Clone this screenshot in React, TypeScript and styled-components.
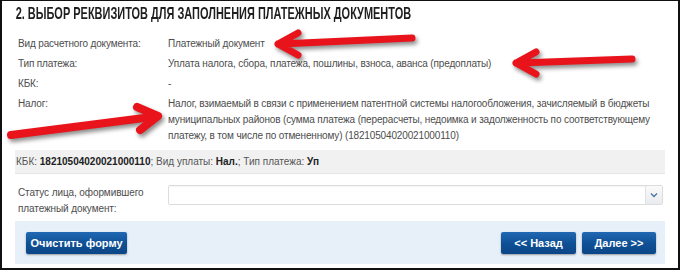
import React from 'react'
import styled, { createGlobalStyle } from 'styled-components'

const GlobalStyle = createGlobalStyle`
  html, body {
    margin: 0;
    padding: 0;
    background: #fff;
  }
  body {
    font-family: "Liberation Sans", Arial, sans-serif;
  }
`

const Frame = styled.div`
  position: relative;
  box-sizing: border-box;
  width: 680px;
  height: 270px;
  border: 2px solid #111;
  border-top-width: 1px;
  padding: 0 13px;
  overflow: hidden;
  background: #fff;
`

const Title = styled.h2`
  margin: 0;
  padding: 3px 0 0 1px;
  height: 22px;
  font-family: "Liberation Sans", Arial, sans-serif;
  font-weight: 700;
  font-size: 17px;
  line-height: 20px;
  color: #1e1e1e;
  white-space: nowrap;
  transform: scaleX(0.645);
  transform-origin: left center;
`

const Details = styled.div`
  display: grid;
  grid-template-columns: 150px 1fr;
  row-gap: 4px;
  margin-top: 10px;
  padding-left: 3px;
  font-size: 10px;
  letter-spacing: -0.15px;
  line-height: 16px;
  color: #4d4d4d;
`

const Label = styled.div``

const Value = styled.div``

const KbkBar = styled.div`
  margin-top: 6px;
  height: 23px;
  display: flex;
  align-items: center;
  padding-left: 1px;
  background: #f1f1f1;
  border-bottom: 1px solid #e6e6e6;
  font-size: 10px;
  color: #555;
  b {
    color: #222;
  }
`

const StatusRow = styled.div`
  display: grid;
  grid-template-columns: 150px 1fr;
  margin-top: 11px;
  padding-left: 3px;
  padding-right: 2px;
  font-size: 10px;
  letter-spacing: -0.1px;
  line-height: 16px;
  color: #4d4d4d;
`

const Select = styled.div`
  height: 18px;
  display: flex;
  justify-content: flex-end;
  border: 1px solid #dcdcdc;
  border-radius: 2px;
  background: #fff;
  box-shadow: inset 0 1px 1px rgba(0, 0, 0, 0.04);
`

const SelectArrow = styled.div`
  width: 16px;
  display: flex;
  align-items: center;
  justify-content: center;
  border-left: 1px solid #e2e2e2;
  background: linear-gradient(#fafafa, #e9ecef);
`

const ButtonBar = styled.div`
  margin-top: 4px;
  height: 43px;
  box-sizing: border-box;
  display: flex;
  align-items: center;
  padding: 0 9px 0 11px;
  gap: 6px;
  background: #e7eff8;
`

const Spacer = styled.div`
  flex: 1;
`

const Button = styled.button<{ $w: number }>`
  width: ${(p) => p.$w}px;
  height: 22px;
  border: none;
  border-radius: 2px;
  padding: 0;
  color: #fff;
  font-family: "Liberation Sans", Arial, sans-serif;
  font-weight: 700;
  font-size: 11px;
  background: linear-gradient(#2169b3, #0e4f94 55%, #0b4687);
  box-shadow: 0 1px 2px rgba(0, 0, 0, 0.35);
`

const Arrows = styled.svg`
  position: absolute;
  left: 0;
  top: 0;
  pointer-events: none;
  filter: drop-shadow(2px 3px 2px rgba(0, 0, 0, 0.45));
`

const ArrowStroke = styled.path<{ $w: number }>`
  fill: none;
  stroke: #e9141b;
  stroke-width: ${(p) => p.$w};
  stroke-linecap: round;
  stroke-linejoin: round;
`

const rows = [
  ['Вид расчетного документа:', 'Платежный документ'],
  ['Тип платежа:', 'Уплата налога, сбора, платежа, пошлины, взноса, аванса (предоплаты)'],
  ['КБК:', '-'],
  [
    'Налог:',
    'Налог, взимаемый в связи с применением патентной системы налогообложения, зачисляемый в бюджеты муниципальных районов (сумма платежа (перерасчеты, недоимка и задолженность по соответствующему платежу, в том числе по отмененному) (18210504020021000110)',
  ],
]

export default function App() {
  return (
    <>
      <GlobalStyle />
      <Frame>
        <Title>2. ВЫБОР РЕКВИЗИТОВ ДЛЯ ЗАПОЛНЕНИЯ ПЛАТЕЖНЫХ ДОКУМЕНТОВ</Title>
        <Details>
          {rows.map(([l, v]) => (
            <React.Fragment key={l}>
              <Label>{l}</Label>
              <Value>{v}</Value>
            </React.Fragment>
          ))}
        </Details>
        <KbkBar>
          <span>
            КБК: <b>18210504020021000110</b>; Вид уплаты: <b>Нал.</b>; Тип платежа: <b>Уп</b>
          </span>
        </KbkBar>
        <StatusRow>
          <Label>
            Статус лица, оформившего
            <br />
            платежный документ:
          </Label>
          <Select>
            <SelectArrow>
              <svg width="8" height="6" viewBox="0 0 8 6">
                <path d="M1 1.5 L4 4.5 L7 1.5" fill="none" stroke="#4f79a6" strokeWidth="1.4" />
              </svg>
            </SelectArrow>
          </Select>
        </StatusRow>
        <ButtonBar>
          <Button $w={101}>Очистить форму</Button>
          <Spacer />
          <Button $w={75}>&lt;&lt; Назад</Button>
          <Button $w={74}>Далее &gt;&gt;</Button>
        </ButtonBar>
        <Arrows width="680" height="270" viewBox="0 0 680 270">
          <ArrowStroke $w={7} d="M410 37 L278 43 M276 43 L296 32 M276 43 L296 54" />
          <ArrowStroke $w={7} d="M630 58 L517 62 M514 62 L534 51 M514 62 L534 73" />
          <ArrowStroke $w={8} d="M9 134 L150 116 M156 115 L135 106 M156 115 L138 129" />
        </Arrows>
      </Frame>
    </>
  )
}
